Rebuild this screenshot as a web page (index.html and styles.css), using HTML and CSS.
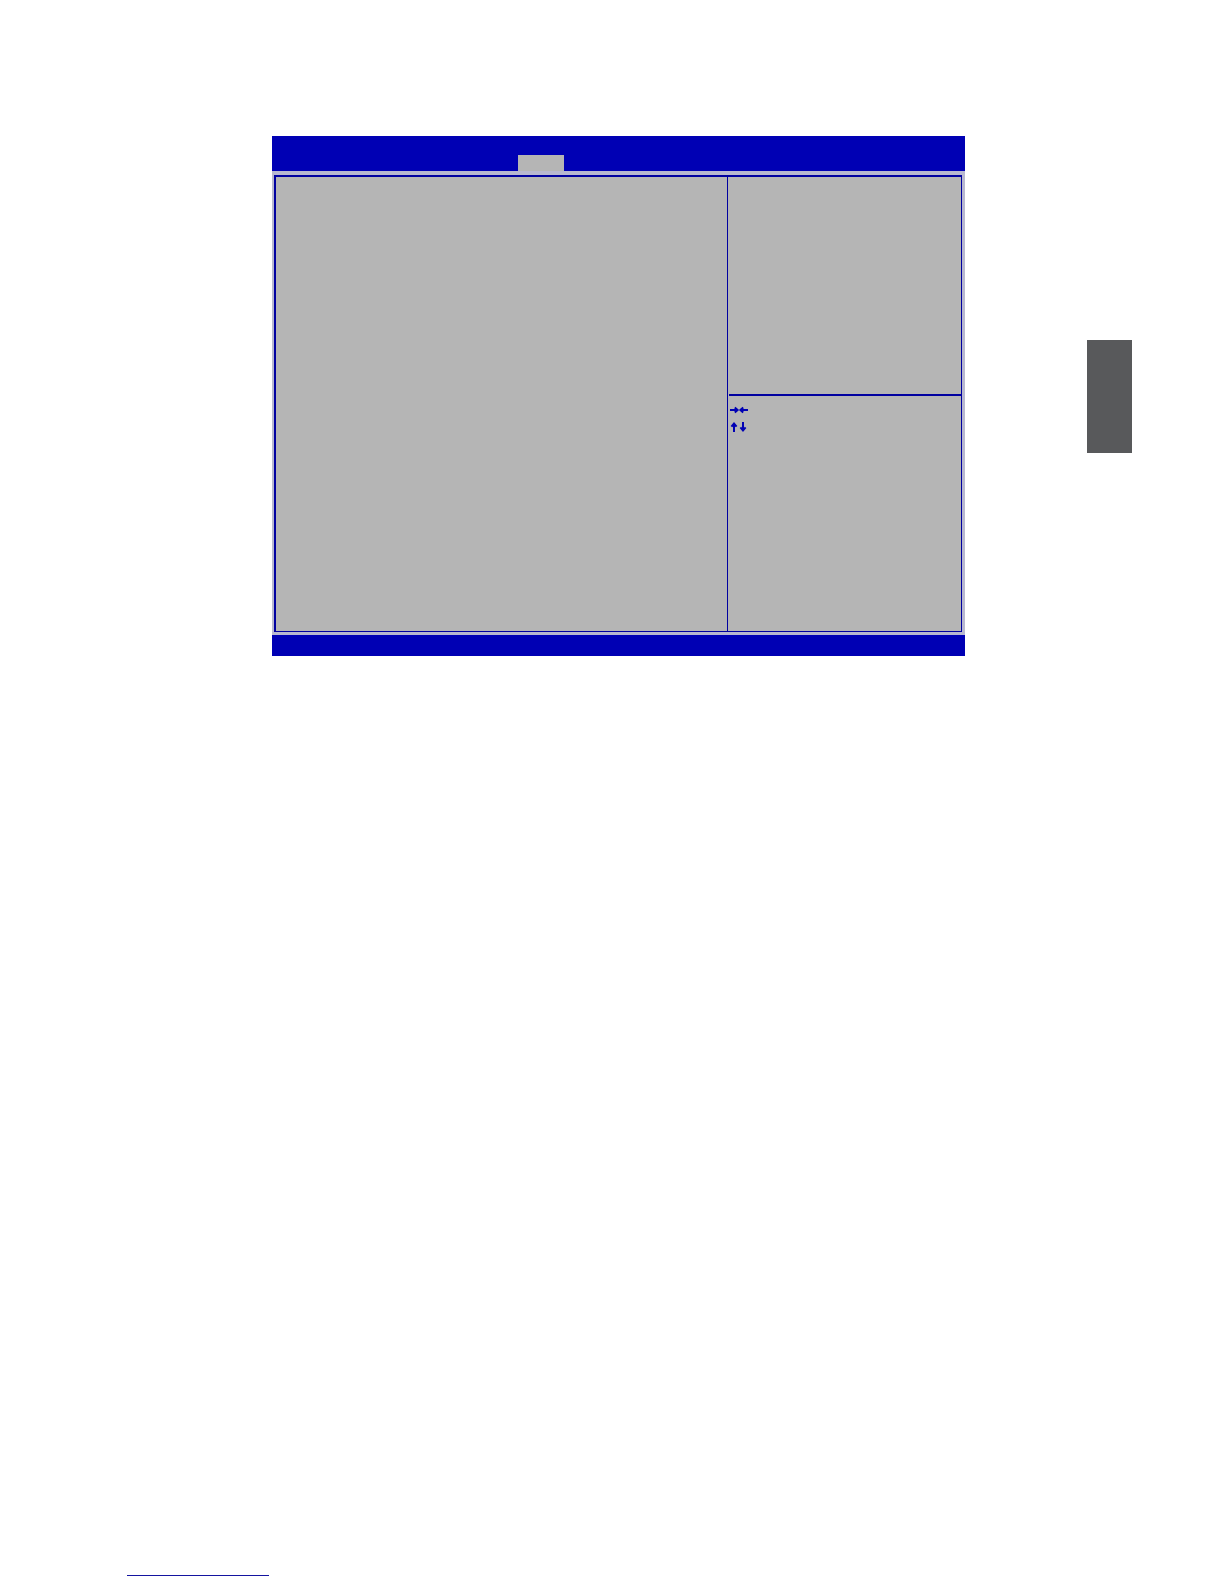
FILE: index.html
```html
<!DOCTYPE html>
<html lang="en">
<head>
    <meta charset="UTF-8">
    <meta name="viewport" content="width=device-width, initial-scale=1.0">
    <title>BIOS Setup</title>
    <link rel="stylesheet" href="styles.css">
</head>
<body>
    <main class="page">
        <section class="screen">
            <header class="menu-bar">
                <div class="active-tab"></div>
            </header>
            <div class="frame">
                <div class="options"></div>
                <aside class="side">
                    <div class="help"></div>
                    <div class="keys">
                        <svg class="key-icon" width="18" height="8" viewBox="0 0 18 8">
                            <path d="M0 4h7M4.8 1.6 7.6 4 4.8 6.4M18 4h-7M13.2 1.6 10.4 4l2.8 2.4"/>
                        </svg>
                        <svg class="key-icon" width="18" height="10" viewBox="0 0 18 10">
                            <path d="M4 10V2M1.4 4.6 4 1.6l2.6 3M13 0v8M10.4 5.4l2.6 3 2.6-3"/>
                        </svg>
                    </div>
                </aside>
            </div>
            <footer class="status-bar"></footer>
        </section>
        <div class="chapter-tab"></div>
    </main>
    <footer class="page-footer">
        <div class="rule"></div>
    </footer>
</body>
</html>
```

FILE: styles.css
```css
:root {
    --blue: #0000b4;
    --line: #0000a0;
    --gray: #b5b5b5;
    --edge: #b8b8d0;
    --chapter: #58595b;
}

* {
    box-sizing: border-box;
}

body {
    margin: 0;
    min-height: 100vh;
    display: flex;
    flex-direction: column;
    justify-content: space-between;
    background: #fff;
    font-family: "Liberation Sans", Arial, sans-serif;
}

.page {
    display: grid;
    grid-template-columns: 272fr 693fr 122fr 45fr 92fr;
    align-items: start;
    padding-top: 136px;
}

.screen {
    grid-column: 2;
    background: var(--edge);
}

/* top menu with the selected tab */
.menu-bar {
    display: grid;
    grid-template-columns: 246fr 46fr 401fr;
    align-items: end;
    height: 35px;
    background: var(--blue);
}

.active-tab {
    grid-column: 2;
    height: 16px;
    background: var(--gray);
}

.frame {
    display: grid;
    grid-template-columns: 451fr 234fr;
    min-height: 457px;
    margin: 4px 3px 3px 2px;
    border: solid var(--line);
    border-width: 2px 1px 1px 2px;
    background: var(--gray);
}

.side {
    display: flex;
    flex-direction: column;
    border-left: 1px solid var(--line);
    padding-left: 1px;
}

.help {
    height: 219px;
    border-bottom: 2px solid var(--line);
}

.keys {
    display: flex;
    flex-direction: column;
    align-items: flex-start;
    gap: 8px;
    padding: 10px 1px;
}

.key-icon {
    display: block;
    fill: none;
    stroke: var(--blue);
    stroke-width: 2;
}

.status-bar {
    height: 21px;
    background: var(--blue);
}

.chapter-tab {
    grid-column: 4;
    height: 113px;
    margin-top: 204px;
    background: var(--chapter);
}

.page-footer {
    display: grid;
    grid-template-columns: 127fr 142fr 955fr;
    padding-bottom: 8px;
}

.rule {
    grid-column: 2;
    border-top: 1px solid #1414a0;
}
```
